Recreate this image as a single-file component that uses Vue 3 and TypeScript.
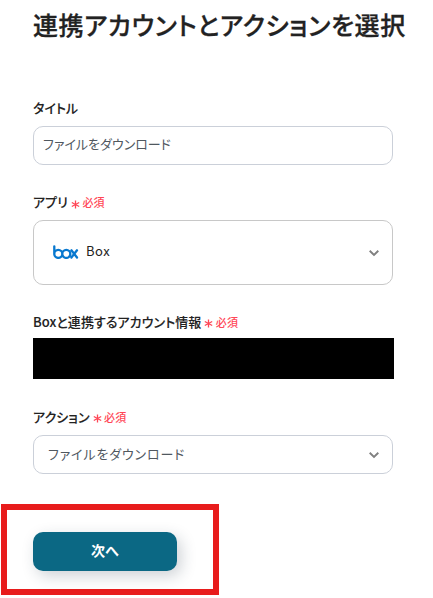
<script setup lang="ts">
import { ref } from 'vue'

const title = ref<string>('ファイルをダウンロード')
const app = ref<string>('Box')
const action = ref<string>('ファイルをダウンロード')
</script>

<template>
  <main class="page">
    <h1 class="heading">連携アカウントとアクションを選択</h1>

    <section class="field field-title">
      <div class="label">タイトル</div>
      <div class="control input"><span class="value">{{ title }}</span></div>
    </section>

    <section class="field field-app">
      <div class="label">
        アプリ<span class="required"><svg class="star star-low" viewBox="0 0 9 9"><path d="M4.5 .5v8M.8 2.5l7.4 4M8.2 2.5l-7.4 4" /></svg>必須</span>
      </div>
      <div class="control app-select">
        <svg class="box-logo" viewBox="0 0 26 14" aria-label="Box">
          <path d="M1.3 1.3v7.7M1.3 8.9a4 4 0 1 0 8 0a4 4 0 1 0-8 0M9.3 8.9a4 4 0 1 0 8 0a4 4 0 1 0-8 0M18.4 5.3l5.6 7.2M24 5.3l-5.6 7.2" />
        </svg>
        <span class="app-name">{{ app }}</span>
        <svg class="chevron" viewBox="0 0 12 8"><path d="M1.7 1.8L6 6l4.3-4.2" /></svg>
      </div>
    </section>

    <section class="field field-account">
      <div class="label account-label">
        Boxと連携するアカウント情報<span class="required"><svg class="star" viewBox="0 0 9 9"><path d="M4.5 .5v8M.8 2.5l7.4 4M8.2 2.5l-7.4 4" /></svg>必須</span>
      </div>
      <div class="masked"></div>
    </section>

    <section class="field field-action">
      <div class="label">
        アクション<span class="required"><svg class="star" viewBox="0 0 9 9"><path d="M4.5 .5v8M.8 2.5l7.4 4M8.2 2.5l-7.4 4" /></svg>必須</span>
      </div>
      <div class="control select">
        <span class="value">{{ action }}</span>
        <svg class="chevron" viewBox="0 0 12 8"><path d="M1.7 1.8L6 6l4.3-4.2" /></svg>
      </div>
    </section>

    <div class="highlight">
      <button class="next" type="button">次へ</button>
    </div>
  </main>
</template>

<style>
body {
  background: #fff;
}
</style>

<style scoped>
.page {
  box-sizing: border-box;
  width: 433px;
  height: 598px;
  overflow: hidden;
  padding-top: 5px;
  font-family: 'Noto Sans CJK JP', 'Noto Sans', sans-serif;
  font-feature-settings: 'palt';
  color: #222;
}

.heading {
  height: 42px;
  margin: 0 0 0 33px;
  font-size: 25px;
  font-weight: 500;
  line-height: 38px;
  letter-spacing: 0.55px;
  white-space: nowrap;
  -webkit-text-stroke: 0.3px currentColor;
}

.field {
  width: 360px;
  margin-left: 33px;
}

.field-title {
  margin-top: 51px;
}

.field-app {
  margin-top: 27px;
}

.field-account {
  margin-top: 27px;
}

.field-action {
  margin-top: 28px;
}

.label {
  display: flex;
  align-items: center;
  height: 28px;
  padding-bottom: 8px;
  box-sizing: border-box;
  font-size: 13px;
  font-weight: 500;
  line-height: 20px;
  white-space: nowrap;
  letter-spacing: 0.05px;
  -webkit-text-stroke: 0.1px currentColor;
}

.account-label {
  height: 26px;
  padding-bottom: 6px;
}

.required {
  display: flex;
  align-items: center;
  gap: 2.5px;
  margin-left: 3px;
  color: #ff4757;
  font-size: 11px;
  letter-spacing: 0.2px;
  -webkit-text-stroke: 0;
}

.star {
  width: 9px;
  height: 9px;
  margin-top: 2px;
  fill: none;
  stroke: currentColor;
  stroke-width: 1.3;
}

.star-low {
  margin-top: 4px;
}

.control {
  box-sizing: border-box;
  display: flex;
  align-items: center;
  height: 39px;
  border: 1px solid #cbd0d9;
  border-radius: 10px;
  background: #fff;
  font-size: 13px;
  color: #50585f;
}

.input {
  padding: 0 9px 4px;
}

.select {
  padding: 0 12px 0 14px;
}

.app-select {
  height: 65px;
  padding: 0 12px 0 19px;
  border-color: #c8c8c8;
  color: #222;
}

.value {
  letter-spacing: 0;
}

.select .value {
  padding-bottom: 3px;
  letter-spacing: 0.85px;
}

.box-logo {
  width: 26px;
  height: 14px;
  margin-bottom: 2px;
  fill: none;
  stroke: #0878cf;
  stroke-width: 2.3;
  stroke-linecap: round;
}

.app-name {
  margin-left: 7px;
  padding-bottom: 4px;
  letter-spacing: 0.5px;
}

.chevron {
  width: 12px;
  height: 8px;
  margin-top: 1px;
  margin-left: auto;
  fill: none;
  stroke: #808080;
  stroke-width: 1.9;
}

.masked {
  width: 361px;
  height: 41px;
  background: #000;
}

.highlight {
  box-sizing: border-box;
  width: 218px;
  height: 91px;
  margin: 30px 0 0 1px;
  padding: 22px 0 0 26px;
  border: 6px solid #e81c1c;
}

.next {
  display: block;
  width: 144px;
  height: 39px;
  padding: 0 0 4px;
  border: 0;
  border-radius: 10px;
  background: #0b6884;
  box-shadow: 4px 5px 15px rgba(30, 50, 70, 0.22);
  color: #fff;
  font: 700 14px/20px 'Noto Sans CJK JP', sans-serif;
}
</style>
